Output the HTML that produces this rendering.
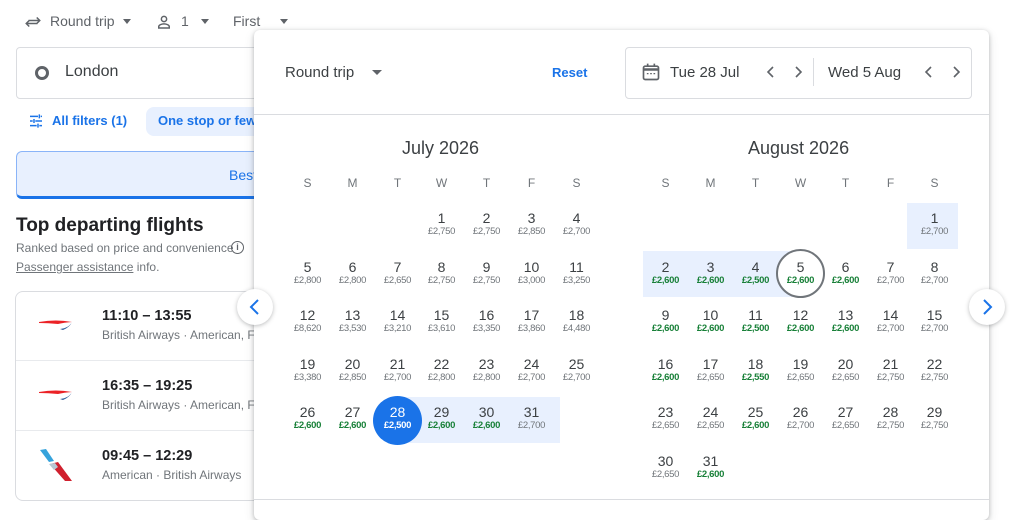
<!DOCTYPE html>
<html><head><meta charset="utf-8"><style>
*{margin:0;padding:0;box-sizing:border-box}
body{width:1024px;height:510px;overflow:hidden;background:#fff;font-family:"Liberation Sans",Arial,sans-serif;color:#3c4043;position:relative}
.a{position:absolute}
.c{position:absolute;width:45px;text-align:center}
.c .n{font-size:14px;line-height:16px;color:#3c4043}
.c .p{font-size:9.5px;line-height:12px;color:#70757a;letter-spacing:-0.3px}
.c .g{color:#188038;font-weight:bold}
.dh{position:absolute;width:45px;text-align:center;font-size:12px;color:#70757a;top:176px}
.mt{position:absolute;font-size:18px;color:#3c4043;top:138px}
.band{position:absolute;background:#e8f0fe}
</style></head><body>
<svg class="a" style="left:24px;top:13px" width="18" height="18" viewBox="0 0 24 24"><path d="M7 10l-4 4 4 4M3 14h15M17 6l4 4-4 4M21 10H6" fill="none" stroke="#5f6368" stroke-width="2"/></svg>
<div class="a" style="left:50px;top:13px;font-size:14px;color:#5f6368">Round trip</div>
<div class="a" style="left:123px;top:19px;border:4px solid transparent;border-top:5px solid #5f6368"></div>
<svg class="a" style="left:155px;top:13px" width="18" height="18" viewBox="0 0 24 24"><circle cx="12" cy="8" r="3.5" fill="none" stroke="#5f6368" stroke-width="2"/><path d="M5 20v-2c0-2 4-3.5 7-3.5s7 1.5 7 3.5v2z" fill="none" stroke="#5f6368" stroke-width="2"/></svg>
<div class="a" style="left:181px;top:13px;font-size:14px;color:#5f6368">1</div>
<div class="a" style="left:201px;top:19px;border:4px solid transparent;border-top:5px solid #5f6368"></div>
<div class="a" style="left:233px;top:13px;font-size:14px;color:#5f6368">First</div>
<div class="a" style="left:280px;top:19px;border:4px solid transparent;border-top:5px solid #5f6368"></div>
<div class="a" style="left:16px;top:47px;width:300px;height:52px;border:1px solid #dadce0;border-radius:4px"></div>
<div class="a" style="left:35px;top:66px;width:14px;height:14px;border:3px solid #5f6368;border-radius:50%"></div>
<div class="a" style="left:65px;top:63px;font-size:16px;color:#3c4043">London</div>
<svg class="a" style="left:28px;top:113px" width="16" height="16" viewBox="0 0 24 24"><path d="M3 5h12M19 5h2M3 12h4M11 12h10M3 19h10M17 19h4M17 2v6M9 9v6M15 16v6" stroke="#1a73e8" stroke-width="2.2" fill="none"/></svg>
<div class="a" style="left:52px;top:113px;font-size:13px;color:#1a73e8;font-weight:bold">All filters (1)</div>
<div class="a" style="left:146px;top:107px;width:130px;height:29px;background:#e8f0fe;border-radius:8px"></div>
<div class="a" style="left:158px;top:113px;font-size:13px;color:#1a73e8;font-weight:bold">One stop or few</div>
<div class="a" style="left:16px;top:151px;width:260px;height:48px;background:#e8f0fe;border:1px solid #8ab4f8;border-bottom:3px solid #1a73e8;border-radius:6px"></div>
<div class="a" style="left:229px;top:167px;font-size:14px;color:#1a73e8">Best</div>
<div class="a" style="left:16px;top:215px;font-size:19px;color:#202124;font-weight:bold">Top departing flights</div>
<div class="a" style="left:16px;top:241px;font-size:12px;color:#70757a">Ranked based on price and convenience</div>
<div class="a" style="left:231px;top:241px;width:13px;height:13px;border:1.5px solid #5f6368;border-radius:50%;font-size:9px;line-height:10px;text-align:center;color:#5f6368;font-weight:bold">i</div>
<div class="a" style="left:16px;top:260px;font-size:12px;color:#70757a"><u>Passenger assistance</u> info.</div>
<div class="a" style="left:15px;top:291px;width:260px;height:210px;border:1px solid #dadce0;border-radius:8px"></div>
<div class="a" style="left:16px;top:360px;width:240px;height:1px;background:#e8eaed"></div>
<div class="a" style="left:16px;top:430px;width:240px;height:1px;background:#e8eaed"></div>
<svg class="a" style="left:38px;top:318px" width="36" height="14" viewBox="0 0 36 14"><path d="M1 4 Q18 1 34 4 Q26 4.5 20 6 Q10 5 1 5z" fill="#eb2226"/><path d="M22 11 Q31 10 34 4 Q32 9 25 12z" fill="#2e5c99"/></svg>
<svg class="a" style="left:38px;top:388px" width="36" height="14" viewBox="0 0 36 14"><path d="M1 4 Q18 1 34 4 Q26 4.5 20 6 Q10 5 1 5z" fill="#eb2226"/><path d="M22 11 Q31 10 34 4 Q32 9 25 12z" fill="#2e5c99"/></svg>
<svg class="a" style="left:38px;top:448px" width="36" height="34" viewBox="0 0 36 34"><path d="M2 2 L8 1 L16 13 L11 14z" fill="#36a3dc"/><path d="M12 16 L20 14 L34 33 L27 33z" fill="#d0202e"/><path d="M11 16 L17 15 L20 19 L16 22z" fill="#b7c7d3"/></svg>
<div class="a" style="left:102px;top:308px;font-size:14.5px;color:#202124;font-weight:bold">11:10 – 13:55</div>
<div class="a" style="left:102px;top:328px;font-size:12px;color:#70757a">British Airways · American, F</div>
<div class="a" style="left:102px;top:378px;font-size:14.5px;color:#202124;font-weight:bold">16:35 – 19:25</div>
<div class="a" style="left:102px;top:398px;font-size:12px;color:#70757a">British Airways · American, F</div>
<div class="a" style="left:102px;top:448px;font-size:14.5px;color:#202124;font-weight:bold">09:45 – 12:29</div>
<div class="a" style="left:102px;top:468px;font-size:12px;color:#70757a">American · British Airways</div>

<div class="a" style="left:254px;top:30px;width:735px;height:490px;background:#fff;border-radius:6px;box-shadow:0 1px 4px rgba(60,64,67,.3),0 4px 10px rgba(60,64,67,.15)"></div>
<div class="a" style="left:285px;top:64px;font-size:15px;color:#3c4043">Round trip</div>
<div class="a" style="left:372px;top:70px;border:5px solid transparent;border-top:5px solid #5f6368"></div>
<div class="a" style="left:552px;top:65px;font-size:13px;color:#1a73e8;font-weight:bold">Reset</div>
<div class="a" style="left:625px;top:47px;width:347px;height:52px;border:1px solid #dadce0;border-radius:4px"></div>
<svg class="a" style="left:641px;top:62px" width="20" height="20" viewBox="0 0 24 24"><rect x="3" y="5" width="18" height="16" rx="2" fill="none" stroke="#5f6368" stroke-width="2"/><path d="M3 9h18" stroke="#5f6368" stroke-width="3"/><path d="M8 2v4M16 2v4" stroke="#5f6368" stroke-width="2"/><path d="M7 14h2M11 14h2M15 14h2" stroke="#5f6368" stroke-width="1.5"/></svg>
<div class="a" style="left:670px;top:64px;font-size:15px;color:#3c4043">Tue 28 Jul</div>
<svg class="a" style="left:764px;top:65px" width="14" height="14" viewBox="0 0 14 14"><path d="M9 2 L4 7 L9 12" fill="none" stroke="#5f6368" stroke-width="1.6"/></svg>
<svg class="a" style="left:791px;top:65px" width="14" height="14" viewBox="0 0 14 14"><path d="M5 2 L10 7 L5 12" fill="none" stroke="#5f6368" stroke-width="1.6"/></svg>
<div class="a" style="left:813px;top:58px;width:1px;height:28px;background:#dadce0"></div>
<div class="a" style="left:828px;top:64px;font-size:15px;color:#3c4043">Wed 5 Aug</div>
<svg class="a" style="left:922px;top:65px" width="14" height="14" viewBox="0 0 14 14"><path d="M9 2 L4 7 L9 12" fill="none" stroke="#5f6368" stroke-width="1.6"/></svg>
<svg class="a" style="left:949px;top:65px" width="14" height="14" viewBox="0 0 14 14"><path d="M5 2 L10 7 L5 12" fill="none" stroke="#5f6368" stroke-width="1.6"/></svg>
<div class="a" style="left:254px;top:114px;width:735px;height:1px;background:#dadce0"></div>
<div class="a" style="left:254px;top:499px;width:735px;height:1px;background:#dadce0"></div>

<div class="mt" style="left:402px">July 2026</div>
<div class="mt" style="left:748px">August 2026</div>
<div class="dh" style="left:285px">S</div><div class="dh" style="left:330px">M</div><div class="dh" style="left:375px">T</div><div class="dh" style="left:419px">W</div><div class="dh" style="left:464px">T</div><div class="dh" style="left:509px">F</div><div class="dh" style="left:554px">S</div>
<div class="dh" style="left:643px">S</div><div class="dh" style="left:688px">M</div><div class="dh" style="left:733px">T</div><div class="dh" style="left:778px">W</div><div class="dh" style="left:823px">T</div><div class="dh" style="left:868px">F</div><div class="dh" style="left:912px">S</div>

<div class="band" style="left:397px;top:397px;width:163px;height:46px"></div>
<div class="band" style="left:907px;top:203px;width:51px;height:46px"></div>
<div class="band" style="left:643px;top:251px;width:157px;height:46px"></div>
<div class="a" style="left:373px;top:396px;width:49px;height:49px;border-radius:50%;background:#1a73e8"></div>
<div class="a" style="left:776px;top:249px;width:49px;height:49px;border-radius:50%;border:2px solid #70757a;background:#fff"></div>

<div class="c" style="left:419px;top:210px"><div class="n">1</div><div class="p">£2,750</div></div>
<div class="c" style="left:464px;top:210px"><div class="n">2</div><div class="p">£2,750</div></div>
<div class="c" style="left:509px;top:210px"><div class="n">3</div><div class="p">£2,850</div></div>
<div class="c" style="left:554px;top:210px"><div class="n">4</div><div class="p">£2,700</div></div>
<div class="c" style="left:285px;top:259px"><div class="n">5</div><div class="p">£2,800</div></div>
<div class="c" style="left:330px;top:259px"><div class="n">6</div><div class="p">£2,800</div></div>
<div class="c" style="left:375px;top:259px"><div class="n">7</div><div class="p">£2,650</div></div>
<div class="c" style="left:419px;top:259px"><div class="n">8</div><div class="p">£2,750</div></div>
<div class="c" style="left:464px;top:259px"><div class="n">9</div><div class="p">£2,750</div></div>
<div class="c" style="left:509px;top:259px"><div class="n">10</div><div class="p">£3,000</div></div>
<div class="c" style="left:554px;top:259px"><div class="n">11</div><div class="p">£3,250</div></div>
<div class="c" style="left:285px;top:307px"><div class="n">12</div><div class="p">£8,620</div></div>
<div class="c" style="left:330px;top:307px"><div class="n">13</div><div class="p">£3,530</div></div>
<div class="c" style="left:375px;top:307px"><div class="n">14</div><div class="p">£3,210</div></div>
<div class="c" style="left:419px;top:307px"><div class="n">15</div><div class="p">£3,610</div></div>
<div class="c" style="left:464px;top:307px"><div class="n">16</div><div class="p">£3,350</div></div>
<div class="c" style="left:509px;top:307px"><div class="n">17</div><div class="p">£3,860</div></div>
<div class="c" style="left:554px;top:307px"><div class="n">18</div><div class="p">£4,480</div></div>
<div class="c" style="left:285px;top:356px"><div class="n">19</div><div class="p">£3,380</div></div>
<div class="c" style="left:330px;top:356px"><div class="n">20</div><div class="p">£2,850</div></div>
<div class="c" style="left:375px;top:356px"><div class="n">21</div><div class="p">£2,700</div></div>
<div class="c" style="left:419px;top:356px"><div class="n">22</div><div class="p">£2,800</div></div>
<div class="c" style="left:464px;top:356px"><div class="n">23</div><div class="p">£2,800</div></div>
<div class="c" style="left:509px;top:356px"><div class="n">24</div><div class="p">£2,700</div></div>
<div class="c" style="left:554px;top:356px"><div class="n">25</div><div class="p">£2,700</div></div>
<div class="c" style="left:285px;top:404px"><div class="n">26</div><div class="p g">£2,600</div></div>
<div class="c" style="left:330px;top:404px"><div class="n">27</div><div class="p g">£2,600</div></div>
<div class="c" style="left:375px;top:404px"><div class="n" style="color:#fff">28</div><div class="p" style="color:#fff;font-weight:bold">£2,500</div></div>
<div class="c" style="left:419px;top:404px"><div class="n">29</div><div class="p g">£2,600</div></div>
<div class="c" style="left:464px;top:404px"><div class="n">30</div><div class="p g">£2,600</div></div>
<div class="c" style="left:509px;top:404px"><div class="n">31</div><div class="p">£2,700</div></div>

<div class="c" style="left:912px;top:210px"><div class="n">1</div><div class="p">£2,700</div></div>
<div class="c" style="left:643px;top:259px"><div class="n">2</div><div class="p g">£2,600</div></div>
<div class="c" style="left:688px;top:259px"><div class="n">3</div><div class="p g">£2,600</div></div>
<div class="c" style="left:733px;top:259px"><div class="n">4</div><div class="p g">£2,500</div></div>
<div class="c" style="left:778px;top:259px"><div class="n">5</div><div class="p g">£2,600</div></div>
<div class="c" style="left:823px;top:259px"><div class="n">6</div><div class="p g">£2,600</div></div>
<div class="c" style="left:868px;top:259px"><div class="n">7</div><div class="p">£2,700</div></div>
<div class="c" style="left:912px;top:259px"><div class="n">8</div><div class="p">£2,700</div></div>
<div class="c" style="left:643px;top:307px"><div class="n">9</div><div class="p g">£2,600</div></div>
<div class="c" style="left:688px;top:307px"><div class="n">10</div><div class="p g">£2,600</div></div>
<div class="c" style="left:733px;top:307px"><div class="n">11</div><div class="p g">£2,500</div></div>
<div class="c" style="left:778px;top:307px"><div class="n">12</div><div class="p g">£2,600</div></div>
<div class="c" style="left:823px;top:307px"><div class="n">13</div><div class="p g">£2,600</div></div>
<div class="c" style="left:868px;top:307px"><div class="n">14</div><div class="p">£2,700</div></div>
<div class="c" style="left:912px;top:307px"><div class="n">15</div><div class="p">£2,700</div></div>
<div class="c" style="left:643px;top:356px"><div class="n">16</div><div class="p g">£2,600</div></div>
<div class="c" style="left:688px;top:356px"><div class="n">17</div><div class="p">£2,650</div></div>
<div class="c" style="left:733px;top:356px"><div class="n">18</div><div class="p g">£2,550</div></div>
<div class="c" style="left:778px;top:356px"><div class="n">19</div><div class="p">£2,650</div></div>
<div class="c" style="left:823px;top:356px"><div class="n">20</div><div class="p">£2,650</div></div>
<div class="c" style="left:868px;top:356px"><div class="n">21</div><div class="p">£2,750</div></div>
<div class="c" style="left:912px;top:356px"><div class="n">22</div><div class="p">£2,750</div></div>
<div class="c" style="left:643px;top:404px"><div class="n">23</div><div class="p">£2,650</div></div>
<div class="c" style="left:688px;top:404px"><div class="n">24</div><div class="p">£2,650</div></div>
<div class="c" style="left:733px;top:404px"><div class="n">25</div><div class="p g">£2,600</div></div>
<div class="c" style="left:778px;top:404px"><div class="n">26</div><div class="p">£2,700</div></div>
<div class="c" style="left:823px;top:404px"><div class="n">27</div><div class="p">£2,650</div></div>
<div class="c" style="left:868px;top:404px"><div class="n">28</div><div class="p">£2,750</div></div>
<div class="c" style="left:912px;top:404px"><div class="n">29</div><div class="p">£2,750</div></div>
<div class="c" style="left:643px;top:453px"><div class="n">30</div><div class="p">£2,650</div></div>
<div class="c" style="left:688px;top:453px"><div class="n">31</div><div class="p g">£2,600</div></div>

<div class="a" style="left:237px;top:289px;width:36px;height:36px;border-radius:50%;background:#fff;box-shadow:0 1px 4px rgba(60,64,67,.35)"></div>
<svg class="a" style="left:247px;top:298px" width="16" height="18" viewBox="0 0 16 18"><path d="M11 2 L4 9 L11 16" fill="none" stroke="#1a73e8" stroke-width="2"/></svg>
<div class="a" style="left:969px;top:289px;width:36px;height:36px;border-radius:50%;background:#fff;box-shadow:0 1px 4px rgba(60,64,67,.35)"></div>
<svg class="a" style="left:979px;top:298px" width="16" height="18" viewBox="0 0 16 18"><path d="M5 2 L12 9 L5 16" fill="none" stroke="#1a73e8" stroke-width="2"/></svg>
</body></html>
